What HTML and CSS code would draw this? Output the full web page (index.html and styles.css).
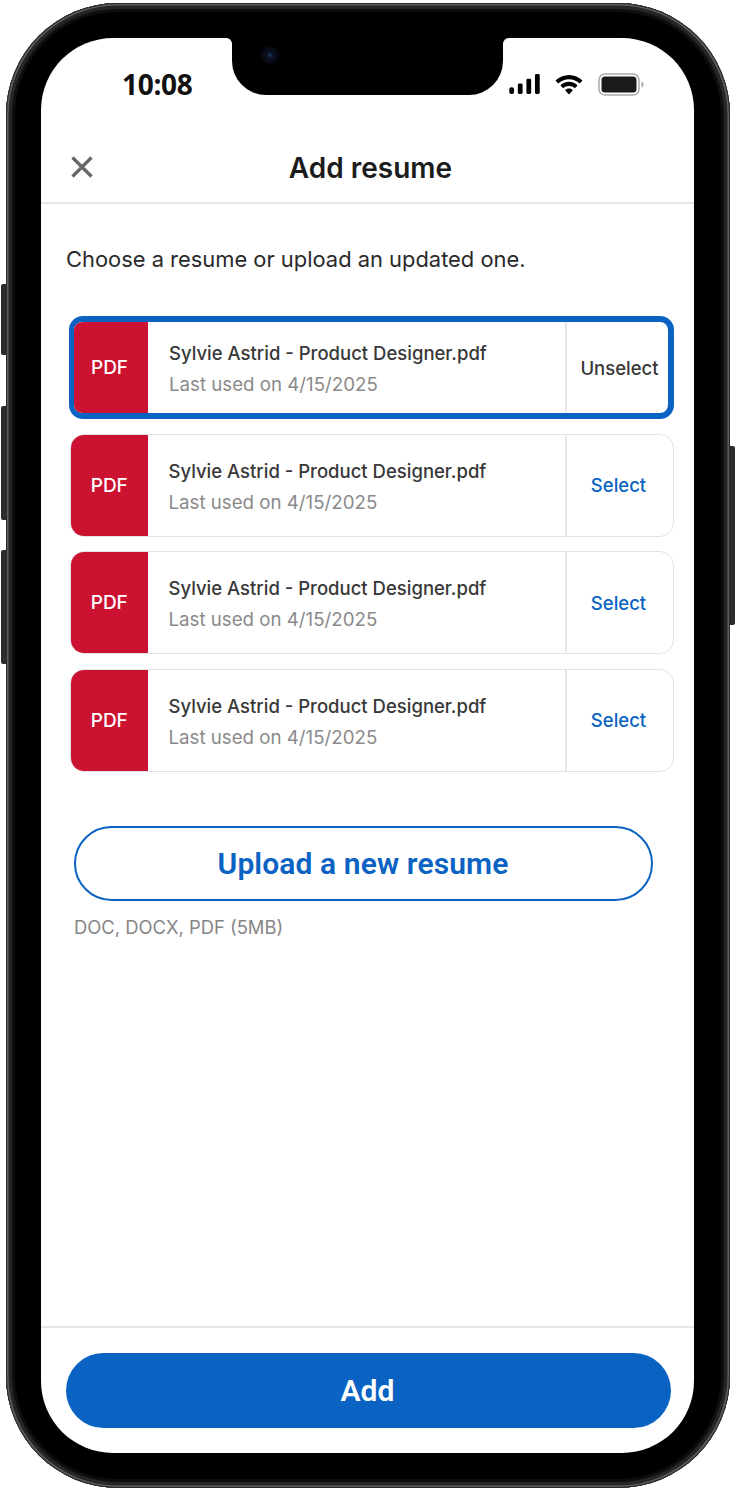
FILE: index.html
```html
<!DOCTYPE html>
<html lang="en">
<head>
<meta charset="utf-8">
<title>Add resume</title>
<link rel="stylesheet" href="styles.css">
</head>
<body>
<div class="phone">
  <span class="side side-a"></span>
  <span class="side side-b"></span>
  <span class="side side-c"></span>
  <span class="side side-d"></span>
  <div class="bezel">
    <div class="screen">
      <div class="notch"><span class="speaker"></span><span class="camera"></span></div>
      <div class="status">
        <span class="time">10:08</span>
        <div class="status-icons">
          <svg class="signal" width="31" height="20" viewBox="0 0 32 21"><rect x="0" y="14" width="5" height="7" rx="2.2"/><rect x="9" y="10" width="5" height="11" rx="1.5"/><rect x="18" y="5" width="5" height="16" rx="1.5"/><rect x="27" y="0" width="5" height="21" rx="1.5"/></svg>
          <svg class="wifi" width="28" height="20" viewBox="0 0 29 21"><path d="M14.5 0C9 0 4 2.200 0.300 5.800L3.200 9C6.100 6.200 10.100 4.400 14.500 4.400S22.900 6.200 25.800 9L28.700 5.800C25 2.200 20 0 14.500 0Z"/><path d="M14.500 7.200C11 7.200 7.900 8.600 5.500 10.900L8.400 14C10 12.500 12.100 11.600 14.500 11.600S19 12.500 20.600 14L23.500 10.900C21.100 8.600 18 7.200 14.500 7.200Z"/><path d="M14.500 14.300C12.900 14.300 11.500 14.900 10.500 15.900L14.500 20.500L18.500 15.900C17.500 14.900 16.100 14.300 14.500 14.300Z"/></svg>
          <svg class="battery" width="46" height="23" viewBox="0 0 46 23"><rect x="1" y="1" width="40" height="21" rx="6" fill="none" stroke="#a9a9a9" stroke-width="1.500"/><rect x="3.500" y="3.500" width="35" height="16" rx="3.500" fill="#1a1a1a"/><path d="M43.500 8.500C45 9 45.500 10 45.500 11.500S45 14 43.500 14.500Z" fill="#a9a9a9"/></svg>
        </div>
      </div>
      <header class="topbar">
        <svg class="close" width="22" height="22" viewBox="0 0 22 22"><path d="M1.500 1.500L20.500 20.500M20.500 1.500L1.500 20.500"/></svg>
        <h1 class="title">Add resume</h1>
      </header>
      <main class="content">
        <p class="lead">Choose a resume or upload an updated one.</p>
        <ul class="list">
          <li class="card card-selected">
            <div class="pdf">PDF</div>
            <div class="info"><div class="name">Sylvie Astrid - Product Designer.pdf</div><div class="meta">Last used on 4/15/2025</div></div>
            <div class="action action-on">Unselect</div>
          </li>
          <li class="card">
            <div class="pdf">PDF</div>
            <div class="info"><div class="name">Sylvie Astrid - Product Designer.pdf</div><div class="meta">Last used on 4/15/2025</div></div>
            <div class="action">Select</div>
          </li>
          <li class="card">
            <div class="pdf">PDF</div>
            <div class="info"><div class="name">Sylvie Astrid - Product Designer.pdf</div><div class="meta">Last used on 4/15/2025</div></div>
            <div class="action">Select</div>
          </li>
          <li class="card">
            <div class="pdf">PDF</div>
            <div class="info"><div class="name">Sylvie Astrid - Product Designer.pdf</div><div class="meta">Last used on 4/15/2025</div></div>
            <div class="action">Select</div>
          </li>
        </ul>
        <div class="upload">Upload a new resume</div>
        <p class="hint">DOC, DOCX, PDF (5MB)</p>
      </main>
      <footer class="footer"><div class="add">Add</div></footer>
    </div>
  </div>
</div>
</body>
</html>
```
FILE: styles.css
```css
* { box-sizing: border-box; }
html, body { margin: 0; padding: 0; background: #fff; }
body { width: 736px; height: 1489px; overflow: hidden; font-family: Inter, "Liberation Sans", sans-serif; }

.phone { position: relative; width: 724px; height: 1485px; margin: 3px 0 0 6px; }
.bezel {
  width: 724px; height: 1485px; padding: 35px 36px 35px 35px;
  background: #000; border-radius: 112px;
  box-shadow: inset 0 0 0 1px #2a2a2a, inset 0 0 0 2.500px #5e5e5e, inset 0 0 0 6px #262626, inset 0 0 0 9px #0e0e0e;
}
.side { position: absolute; width: 6px; background: #2c2c2c; }
.side-a { left: -5px; top: 281px; height: 71px; border-radius: 2px 0 0 2px; }
.side-b { left: -5px; top: 403px; height: 114px; border-radius: 2px 0 0 2px; }
.side-c { left: -5px; top: 547px; height: 114px; border-radius: 2px 0 0 2px; }
.side-d { right: -5px; top: 443px; height: 179px; border-radius: 0 2px 2px 0; }

.screen {
  position: relative; width: 653px; height: 1415px; background: #fff;
  border-radius: 72px; overflow: hidden; display: flex; flex-direction: column;
}
.notch {
  position: absolute; left: 191px; top: 0; width: 271px; height: 57px;
  background: #000; border-radius: 0 0 34px 34px;
}
.notch::before, .notch::after { content: ""; position: absolute; top: 0; width: 6px; height: 6px; }
.notch::before { left: -6px; background: radial-gradient(circle at 0 100%, #fff 5.500px, #000 6.500px); }
.notch::after { right: -6px; background: radial-gradient(circle at 100% 100%, #fff 5.500px, #000 6.500px); }
.camera { position: absolute; left: 29px; top: 8px; width: 18px; height: 18px; border-radius: 50%; background: radial-gradient(circle, #1c3a66 0, #0a1020 25%, #05070f 70%, #000 100%); }
.speaker { position: absolute; left: 86px; top: -21px; width: 104px; height: 3px; background: #1b1b1b; }

.status { height: 91px; flex: none; display: flex; justify-content: space-between; padding: 27px 50px 0 81px; }
.time { font-family: "Open Sans", sans-serif; font-weight: 700; font-size: 28px; line-height: 38px; color: #111; letter-spacing: -0.300px; }
.status-icons { display: flex; align-items: flex-start; padding-top: 9px; }
.signal { fill: #000; margin-right: 15px; }
.wifi { fill: #000; margin-right: 15px; margin-top: 1px; }
.battery { margin-top: -1px; }

.topbar { height: 75px; flex: none; display: flex; align-items: center; justify-content: center; position: relative; border-bottom: 2px solid #e6e6e6; padding-top: 5px; }
.close { position: absolute; left: 30px; top: 27px; fill: none; stroke: #666; stroke-width: 3.200px; }
.title { margin: 0 0 0 6px; font-size: 28px; font-weight: 600; line-height: 38px; color: #1c1c1c; }

.content { flex: 1; display: flex; flex-direction: column; padding: 0 20px 0 28px; }
.lead { margin: 39px 0 0 -3px; font-size: 21.900px; line-height: 32px; color: #2a2a2a; }
.list { list-style: none; margin: 41px 0 0; padding: 0; display: flex; flex-direction: column; gap: 14.500px; }
.card { height: 103px; display: flex; border: 1.500px solid #dfe3e8; border-radius: 14px; overflow: hidden; margin-left: 1px; }
.card-selected { border-width: 6px 6px 6px 5px; border-color: #0a63c2; margin-left: 0; }
.pdf { width: 76.500px; flex: none; background: #cb1230; color: #fff; font-size: 19px; font-weight: 500; display: flex; align-items: center; justify-content: center; }
.card-selected .pdf { width: 74px; padding-right: 3px; }
.info { flex: 1; padding: 22px 0 0 21px; }
.card-selected .info { padding-top: 17px; }
.name { font-size: 18.500px; font-weight: 500; line-height: 28px; color: #383838; }
.meta { font-size: 18.700px; line-height: 28px; margin-top: 4px; color: #8a8a8a; }
.action { width: 108px; flex: none; border-left: 2px solid #e5e8ec; color: #0a63c2; font-size: 18.500px; font-weight: 500; display: flex; align-items: center; justify-content: center; padding-right: 3px; }
.action-on { width: 103px; color: #383838; padding: 0 0 0 4px; }

.upload { margin: 54px 0 0 5px; width: 579px; height: 75px; border: 2px solid #0a63c2; border-radius: 38px; color: #0a63c2; font-family: Roboto, sans-serif; font-weight: 600; font-size: 30px; letter-spacing: 0.100px; display: flex; align-items: center; justify-content: center; padding-right: 1px; }
.hint { margin: 12px 0 0 5px; font-size: 18.400px; line-height: 28px; color: #868686; }

.footer { flex: none; height: 127px; border-top: 2px solid #e6e6e6; padding: 25px 23px 0 25px; }
.add { height: 75px; width: 605px; border-radius: 38px; background: #0a63c2; color: #fff; font-family: Roboto, sans-serif; font-weight: 600; font-size: 30px; display: flex; align-items: center; justify-content: center; padding-right: 2px; }
```
